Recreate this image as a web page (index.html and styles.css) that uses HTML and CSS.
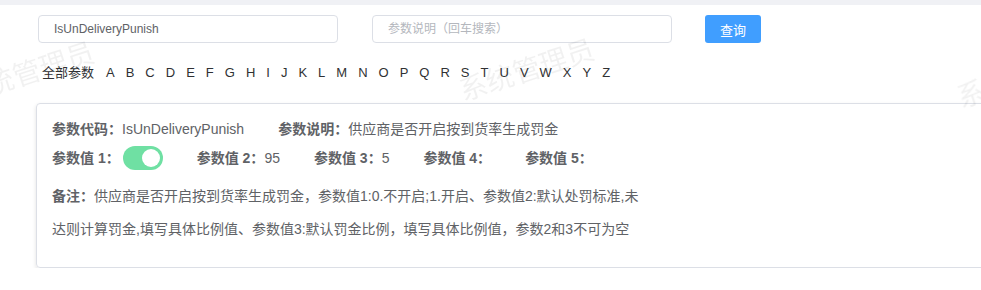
FILE: index.html
```html
<!DOCTYPE html>
<html lang="zh-CN">
    <head>
        <meta charset="UTF-8" />
        <title>系统参数</title>
        <link rel="stylesheet" href="styles.css">
    </head>

    <body>
        <div class="topbar"></div>

        <!-- 搜索区域 -->
        <div class="search">
            <input class="ipt" type="text" value="IsUnDeliveryPunish" />
            <input class="ipt" type="text" placeholder="参数说明（回车搜索）" />
            <button class="btn">查询</button>
        </div>

        <!-- 字母筛选 -->
        <div class="letters">
            <span class="all">全部参数</span>
            <span>A</span><span>B</span><span>C</span><span>D</span><span>E</span>
            <span>F</span><span>G</span><span>H</span><span>I</span><span>J</span>
            <span>K</span><span>L</span><span>M</span><span>N</span><span>O</span>
            <span>P</span><span>Q</span><span>R</span><span>S</span><span>T</span>
            <span>U</span><span>V</span><span>W</span><span>X</span><span>Y</span>
            <span>Z</span>
        </div>

        <!-- 参数卡片 -->
        <div class="card">
            <div class="row">
                <div class="item"><b>参数代码：</b><span>IsUnDeliveryPunish</span></div>
                <div class="item"><b>参数说明：</b><span>供应商是否开启按到货率生成罚金</span></div>
            </div>
            <div class="row row2">
                <div class="item">
                    <b>参数值 1：</b>
                    <span class="switch"><i></i></span>
                </div>
                <div class="item"><b>参数值 2：</b><span>95</span></div>
                <div class="item"><b>参数值 3：</b><span>5</span></div>
                <div class="item"><b>参数值 4：</b><span></span></div>
                <div class="item"><b>参数值 5：</b><span></span></div>
            </div>
            <p class="note">
                <b>备注：</b>供应商是否开启按到货率生成罚金，参数值1:0.不开启;1.开启、参数值2:默认处罚标准,未达则计算罚金,填写具体比例值、参数值3:默认罚金比例，填写具体比例值，参数2和3不可为空
            </p>
        </div>

        <!-- 水印 -->
        <div class="mark">
            <span class="m1">系统管理员</span>
            <span class="m2">系统管理员</span>
            <span class="m3">系统管理员</span>
        </div>
    </body>
</html>
```

FILE: styles.css
```css
body {
    margin: 0;
    overflow: hidden;
    background: #fff;
    font-family: "Liberation Sans", "Noto Sans CJK SC", sans-serif;
    color: #606266;
}

.topbar {
    height: 5px;
    background: #f0f1f5;
}

.search {
    display: flex;
    align-items: center;
    gap: 34px;
    padding: 10px 0 0 38px;
}

.ipt {
    box-sizing: border-box;
    width: 300px;
    height: 28px;
    padding: 0 15px;
    border: 1px solid #dcdfe6;
    border-radius: 4px;
    font-family: inherit;
    font-size: 12px;
    color: #606266;
    outline: none;
}
.ipt::placeholder {
    color: #b4b7bd;
}

.btn {
    width: 56px;
    height: 28px;
    margin-left: -1px;
    border: 0;
    border-radius: 3px;
    background: #409eff;
    color: #fff;
    font-family: inherit;
    font-size: 13px;
}

.letters {
    display: flex;
    gap: 11px;
    margin: 20px 0 0 42px;
    font-size: 13px;
    line-height: 20px;
    color: #303133;
}
.letters .all {
    margin-right: 1px;
}

.card {
    box-sizing: border-box;
    width: 1000px;
    margin: 20px 0 0 36px;
    padding: 15px 15px 21px;
    border: 1px solid #dcdfe6;
    border-radius: 4px;
    box-shadow: 0 2px 4px rgba(0, 0, 0, 0.12);
    font-size: 14px;
}

.row {
    display: flex;
    align-items: center;
    line-height: 20px;
}
.row2 {
    margin-top: 7px;
}

.item {
    display: flex;
    align-items: center;
    margin-right: 34px;
}

b {
    font-weight: bold;
    color: #606266;
}

/* 开关 */
.switch {
    position: relative;
    display: inline-block;
    width: 40px;
    height: 24px;
    margin-left: 3px;
    border-radius: 12px;
    background: #6fe0a3;
}
.switch i {
    position: absolute;
    top: 3px;
    right: 3px;
    width: 18px;
    height: 18px;
    border-radius: 50%;
    background: #fff;
}

.note {
    width: 600px;
    margin: 10px 0 0;
    line-height: 33px;
}

/* 水印 */
.mark {
    position: fixed;
    inset: 0;
    pointer-events: none;
}
.mark span {
    position: absolute;
    font-size: 28px;
    line-height: 40px;
    color: rgba(0, 0, 0, 0.055);
    white-space: nowrap;
    transform: rotate(-18deg);
}
.m1 {
    left: -43px;
    top: 54px;
}
.m2 {
    left: 457px;
    top: 51px;
}
.m3 {
    left: 955px;
    top: 58px;
}
```
